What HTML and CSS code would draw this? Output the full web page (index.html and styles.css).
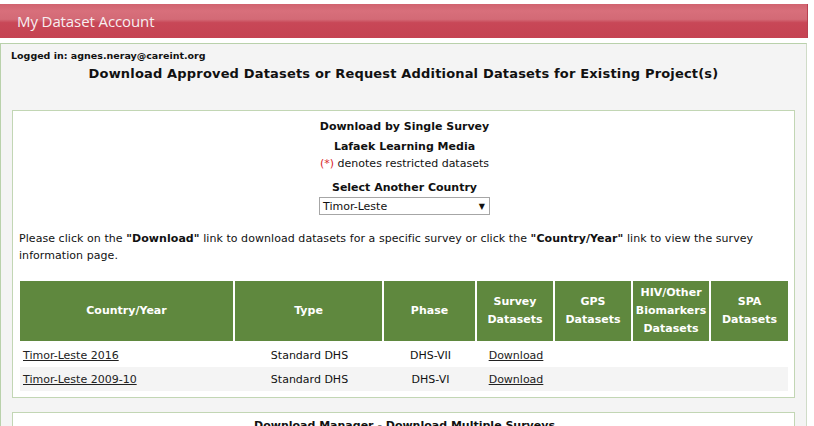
FILE: index.html
```html
<!DOCTYPE html>
<html>
<head>
<meta charset="utf-8">
<link rel="stylesheet" href="styles.css">
</head>
<body>
<div class="banner"><span class="banner-title">My Dataset Account</span></div>
<div class="account">
  <div class="logged">Logged in: agnes.neray@careint.org</div>
  <h1 class="page-title">Download Approved Datasets or Request Additional Datasets for Existing Project(s)</h1>
  <div class="panel">
    <div class="center bold line1">Download by Single Survey</div>
    <div class="center bold line2">Lafaek Learning Media</div>
    <div class="center line3"><span class="red">(*)</span> denotes restricted datasets</div>
    <div class="center bold line4">Select Another Country</div>
    <div class="center"><div class="select"><span>Timor-Leste</span><span class="arrow">▼</span></div></div>
    <p class="note">Please click on the <b>"Download"</b> link to download datasets for a specific survey or click the <b>"Country/Year"</b> link to view the survey information page.</p>
    <table class="surveys">
      <thead>
        <tr>
          <th class="c1">Country/Year</th>
          <th class="c2">Type</th>
          <th class="c3">Phase</th>
          <th class="c4">Survey Datasets</th>
          <th class="c5">GPS Datasets</th>
          <th class="c6">HIV/Other Biomarkers Datasets</th>
          <th class="c7">SPA Datasets</th>
        </tr>
      </thead>
      <tbody>
        <tr>
          <td class="left"><a href="#">Timor-Leste 2016</a></td>
          <td>Standard DHS</td>
          <td>DHS-VII</td>
          <td><a href="#">Download</a></td>
          <td></td><td></td><td></td>
        </tr>
        <tr class="alt">
          <td class="left"><a href="#">Timor-Leste 2009-10</a></td>
          <td>Standard DHS</td>
          <td>DHS-VI</td>
          <td><a href="#">Download</a></td>
          <td></td><td></td><td></td>
        </tr>
      </tbody>
    </table>
  </div>
  <div class="panel panel2">
    <div class="center bold">Download Manager - Download Multiple Surveys</div>
  </div>
</div>
</body>
</html>
```

FILE: styles.css
```css
html, body {
  margin: 0;
  padding: 0;
  background: #ffffff;
  font-family: "DejaVu Sans", Verdana, sans-serif;
  font-size: 11px;
  color: #111;
  overflow: hidden;
}
.banner {
  margin-top: 4px;
  width: 808px;
  height: 34px;
  box-sizing: border-box;
  background: linear-gradient(to bottom, #d0636f 0%, #d86f7b 20%, #d36a76 45%, #c84757 55%, #c54352 100%);
  display: flex;
  align-items: center;
  padding-left: 17px;
  border-right: 1px solid #b84050;
}
.banner-title {
  font-family: "Open Sans", "DejaVu Sans", sans-serif;
  font-size: 15px;
  color: #f7eef0;
  letter-spacing: -0.1px;
}
.account {
  margin-top: 5px;
  width: 807px;
  box-sizing: border-box;
  border: 1px solid #b9d1ab;
  border-right-color: #d0dcc8;
  background: #f4f4f4;
  padding: 6px 10px 0 10px;
  height: 400px;
}
.logged {
  font-size: 9.5px;
  font-weight: bold;
  line-height: 12px;
}
.page-title {
  margin: 4px 0 0 0;
  font-size: 13px;
  font-weight: bold;
  text-align: center;
  line-height: 16px;
  letter-spacing: 0.17px;
}
.panel {
  margin: 28px 0 0 1px;
  width: 783px;
  box-sizing: border-box;
  border: 1px solid #c2d6b4;
  background: #ffffff;
  padding: 8px 4px 6px 6px;
}
.panel2 {
  margin-top: 14px;
  padding-top: 6px;
}
.center { text-align: center; }
.bold { font-weight: bold; }
.red { color: #d9262b; }
.line1 { line-height: 16px; }
.line2 { line-height: 16px; margin-top: 4px; }
.line3 { line-height: 16px; margin-top: 1px; }
.line4 { line-height: 16px; margin-top: 8px; }
.select {
  display: inline-flex;
  justify-content: space-between;
  align-items: center;
  width: 171px;
  height: 18px;
  box-sizing: border-box;
  border: 1px solid #a6a6a6;
  padding: 0 4px 0 3px;
  text-align: left;
  margin-top: 1px;
  background: #fff;
}
.arrow { font-size: 8px; }
.note {
  margin: 15px 0 0 0;
  line-height: 17px;
  letter-spacing: 0.06px;
}
.surveys {
  margin: 17px 0 0 1px;
  width: 768px;
  table-layout: fixed;
  border-collapse: separate;
  border-spacing: 0;
}
.surveys th {
  background: #5f883e;
  color: #ffffff;
  font-weight: bold;
  height: 62px;
  box-sizing: border-box;
  padding: 0 2px;
  line-height: 18px;
  border-bottom: 2px solid #fff;
  border-right: 2px solid #fff;
}
.surveys th.c7 { border-right: 0; }
.c1 { width: 215px; }
.c2 { width: 149px; }
.c3 { width: 93px; }
.c4, .c5, .c6 { width: 78px; }
.c7 { width: 77px; }
.surveys td {
  text-align: center;
  height: 24px;
  padding: 0;
}
.surveys td.left {
  text-align: left;
  padding-left: 3px;
}
.surveys tr.alt td { background: #f4f4f4; }
.surveys a { color: #222; }
```
